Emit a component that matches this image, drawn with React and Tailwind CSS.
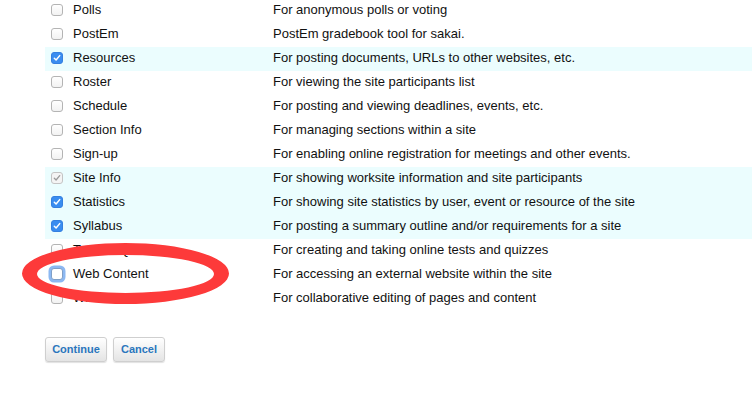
import React from "react";

const rows = [
  ["Polls", "For anonymous polls or voting", "off"],
  ["PostEm", "PostEm gradebook tool for sakai.", "off"],
  ["Resources", "For posting documents, URLs to other websites, etc.", "on"],
  ["Roster", "For viewing the site participants list", "off"],
  ["Schedule", "For posting and viewing deadlines, events, etc.", "off"],
  ["Section Info", "For managing sections within a site", "off"],
  ["Sign-up", "For enabling online registration for meetings and other events.", "off"],
  ["Site Info", "For showing worksite information and site participants", "disabled"],
  ["Statistics", "For showing site statistics by user, event or resource of the site", "on"],
  ["Syllabus", "For posting a summary outline and/or requirements for a site", "on"],
  ["Tests & Quizzes", "For creating and taking online tests and quizzes", "off"],
  ["Web Content", "For accessing an external website within the site", "focus"],
  ["Wiki", "For collaborative editing of pages and content", "off"],
];

function Check({ state }) {
  if (state === "on") {
    return (
      <div className="w-[12px] h-[12px] rounded-[3px] bg-[#3a8df0] border border-[#3580e0] flex items-center justify-center">
        <svg width="8" height="8" viewBox="0 0 8 8">
          <path d="M1.3 4.2 L3.1 6 L6.7 1.6" fill="none" stroke="white" strokeWidth="1.5" strokeLinecap="round" strokeLinejoin="round" />
        </svg>
      </div>
    );
  }
  if (state === "disabled") {
    return (
      <div className="w-[12px] h-[12px] rounded-[3px] bg-[#f4f4f4] border border-[#c4c4c4] flex items-center justify-center">
        <svg width="8" height="8" viewBox="0 0 8 8">
          <path d="M1.3 4.2 L3.1 6 L6.7 1.6" fill="none" stroke="#9a9a9a" strokeWidth="1.3" strokeLinecap="round" strokeLinejoin="round" />
        </svg>
      </div>
    );
  }
  if (state === "focus") {
    return (
      <div className="w-[12px] h-[12px] rounded-[3px] bg-white border border-[#7f9fc8] shadow-[0_0_0_2.5px_#8cb8f2]" />
    );
  }
  return (
    <div className="w-[12px] h-[12px] rounded-[3px] bg-gradient-to-b from-white to-[#f2f2f2] border border-[#b4b4b4]" />
  );
}

const ring =
  "M22 273.5 a103.5 30.5 0 1 0 207 0 a103.5 30.5 0 1 0 -207 0 Z " +
  "M37 274 a88.5 19 0 1 0 177 0 a88.5 19 0 1 0 -177 0 Z";

export default function App() {
  return (
    <div
      className="relative w-[752px] h-[416px] bg-white overflow-hidden text-[13px] text-[#111]"
      style={{ fontFamily: '"Liberation Sans", Arial, Helvetica, sans-serif' }}
    >
      <div className="pl-[45px] -mt-px">
        {rows.map(([name, desc, state]) => {
          const hl = state === "on" || state === "disabled";
          return (
            <div
              key={name}
              className={`flex items-center h-[24px] pb-[2px] ${hl ? "bg-[#ebfdfe]" : ""}`}
            >
              <div className="w-[28px] pl-[6px] flex items-center">
                <Check state={state} />
              </div>
              <div className="w-[200px] text-[#111]">{name}</div>
              <div>{desc}</div>
            </div>
          );
        })}
      </div>
      <div className="pl-[45px] mt-[26px] flex gap-[6px]">
        <button className="w-[62px] h-[25px] rounded-[3px] border border-[#cfcfcf] bg-gradient-to-b from-white to-[#e4e4e4] shadow-[0_1px_1px_rgba(0,0,0,0.12)] text-[11px] font-bold text-[#2a76bd]">
          Continue
        </button>
        <button className="w-[52px] h-[25px] rounded-[3px] border border-[#cfcfcf] bg-gradient-to-b from-white to-[#e4e4e4] shadow-[0_1px_1px_rgba(0,0,0,0.12)] text-[11px] font-bold text-[#2a76bd]">
          Cancel
        </button>
      </div>
      <svg className="absolute left-0 top-0 pointer-events-none" width="752" height="416">
        <path d={ring} fill="#fd3a3a" fillRule="evenodd" />
      </svg>
    </div>
  );
}
